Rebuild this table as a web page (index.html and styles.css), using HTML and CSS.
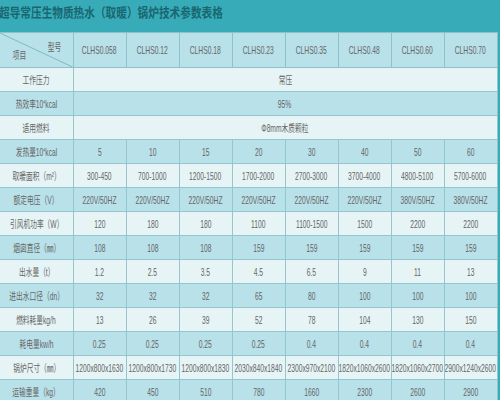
FILE: index.html
```html
<!DOCTYPE html>
<html lang="zh">
<head>
<meta charset="utf-8">
<link rel="stylesheet" href="styles.css">
</head>
<body>
<div class="page">
  <div class="titlebar"><span class="title">超导常压生物质热水（取暖）锅炉技术参数表格</span></div>
  <table class="spec">
    <colgroup>
      <col class="c-first"><col><col><col><col><col><col><col><col>
    </colgroup>
    <tr class="head">
      <th class="diag">
        <svg class="diag-line" width="73" height="35" viewBox="0 0 73 35" preserveAspectRatio="none"><line x1="0" y1="0" x2="73" y2="35" stroke="#7fb9c2" stroke-width="1"/></svg>
        <span class="t tr">型号</span>
        <span class="t bl">项目</span>
      </th>
      <th><span class="t">CLHS0.058</span></th>
      <th><span class="t">CLHS0.12</span></th>
      <th><span class="t">CLHS0.18</span></th>
      <th><span class="t">CLHS0.23</span></th>
      <th><span class="t">CLHS0.35</span></th>
      <th><span class="t">CLHS0.48</span></th>
      <th><span class="t">CLHS0.60</span></th>
      <th><span class="t">CLHS0.70</span></th>
    </tr>
    <tr class="light"><td><span class="t">工作压力</span></td><td colspan="8"><span class="t">常压</span></td></tr>
    <tr class="dark"><td><span class="t">热效率10<sup>4</sup>kcal</span></td><td colspan="8"><span class="t">95%</span></td></tr>
    <tr class="light"><td><span class="t">适用燃料</span></td><td colspan="8"><span class="t">Φ8mm木质颗粒</span></td></tr>
    <tr class="dark"><td><span class="t">发热量10<sup>4</sup>kcal</span></td><td><span class="t">5</span></td><td><span class="t">10</span></td><td><span class="t">15</span></td><td><span class="t">20</span></td><td><span class="t">30</span></td><td><span class="t">40</span></td><td><span class="t">50</span></td><td><span class="t">60</span></td></tr>
    <tr class="light"><td><span class="t">取暖面积（m²）</span></td><td><span class="t">300-450</span></td><td><span class="t">700-1000</span></td><td><span class="t">1200-1500</span></td><td><span class="t">1700-2000</span></td><td><span class="t">2700-3000</span></td><td><span class="t">3700-4000</span></td><td><span class="t">4800-5100</span></td><td><span class="t">5700-6000</span></td></tr>
    <tr class="dark"><td><span class="t">额定电压（V）</span></td><td><span class="t">220V/50HZ</span></td><td><span class="t">220V/50HZ</span></td><td><span class="t">220V/50HZ</span></td><td><span class="t">220V/50HZ</span></td><td><span class="t">220V/50HZ</span></td><td><span class="t">220V/50HZ</span></td><td><span class="t">380V/50HZ</span></td><td><span class="t">380V/50HZ</span></td></tr>
    <tr class="light"><td><span class="t">引风机功率（W）</span></td><td><span class="t">120</span></td><td><span class="t">180</span></td><td><span class="t">180</span></td><td><span class="t">1100</span></td><td><span class="t">1100-1500</span></td><td><span class="t">1500</span></td><td><span class="t">2200</span></td><td><span class="t">2200</span></td></tr>
    <tr class="dark"><td><span class="t">烟囱直径（㎜）</span></td><td><span class="t">108</span></td><td><span class="t">108</span></td><td><span class="t">108</span></td><td><span class="t">159</span></td><td><span class="t">159</span></td><td><span class="t">159</span></td><td><span class="t">159</span></td><td><span class="t">159</span></td></tr>
    <tr class="light"><td><span class="t">出水量（t）</span></td><td><span class="t">1.2</span></td><td><span class="t">2.5</span></td><td><span class="t">3.5</span></td><td><span class="t">4.5</span></td><td><span class="t">6.5</span></td><td><span class="t">9</span></td><td><span class="t">11</span></td><td><span class="t">13</span></td></tr>
    <tr class="dark"><td><span class="t">进出水口径（dn）</span></td><td><span class="t">32</span></td><td><span class="t">32</span></td><td><span class="t">32</span></td><td><span class="t">65</span></td><td><span class="t">80</span></td><td><span class="t">100</span></td><td><span class="t">100</span></td><td><span class="t">100</span></td></tr>
    <tr class="light"><td><span class="t">燃料耗量kg/h</span></td><td><span class="t">13</span></td><td><span class="t">26</span></td><td><span class="t">39</span></td><td><span class="t">52</span></td><td><span class="t">78</span></td><td><span class="t">104</span></td><td><span class="t">130</span></td><td><span class="t">150</span></td></tr>
    <tr class="dark"><td><span class="t">耗电量kw/h</span></td><td><span class="t">0.25</span></td><td><span class="t">0.25</span></td><td><span class="t">0.25</span></td><td><span class="t">0.25</span></td><td><span class="t">0.4</span></td><td><span class="t">0.4</span></td><td><span class="t">0.4</span></td><td><span class="t">0.4</span></td></tr>
    <tr class="light"><td><span class="t">锅炉尺寸（㎜）</span></td><td><span class="t">1200x800x1630</span></td><td><span class="t">1200x800x1730</span></td><td><span class="t">1200x800x1830</span></td><td><span class="t">2030x840x1840</span></td><td><span class="t">2300x970x2100</span></td><td><span class="t">1820x1060x2600</span></td><td><span class="t">1820x1060x2700</span></td><td><span class="t">2900x1240x2600</span></td></tr>
    <tr class="dark"><td><span class="t">运输重量（kg）</span></td><td><span class="t">420</span></td><td><span class="t">450</span></td><td><span class="t">510</span></td><td><span class="t">780</span></td><td><span class="t">1660</span></td><td><span class="t">2300</span></td><td><span class="t">2600</span></td><td><span class="t">2900</span></td></tr>
  </table>
</div>
</body>
</html>
```
FILE: styles.css
```css
html, body {
  margin: 0;
  padding: 0;
  background: #37acb8;
  overflow: hidden;
}
.page {
  width: 500px;
  height: 400px;
  overflow: hidden;
  background: #37acb8;
}
.titlebar {
  height: 32px;
  background: #37acb8;
  box-sizing: border-box;
  padding-top: 3px;
  white-space: nowrap;
}
.title {
  display: inline-block;
  font-family: "Noto Sans CJK SC", sans-serif;
  font-weight: bold;
  font-size: 13px;
  line-height: 16px;
  color: #1a6670;
  transform: scaleX(0.82);
  transform-origin: left center;
  margin-left: -1px;
}
.spec {
  border-collapse: collapse;
  table-layout: fixed;
  width: 497px;
  font-family: "Liberation Sans", "Noto Sans CJK SC", sans-serif;
  font-size: 10.5px;
  color: #656565;
}
.spec col { width: 53px; }
.spec col.c-first { width: 73px; }
.spec th, .spec td {
  border: 1px solid #93c6cd;
  padding: 0;
  text-align: center;
  vertical-align: middle;
  white-space: nowrap;
  overflow: hidden;
  font-weight: normal;
}
.spec tr { height: 24px; }
.spec tr.head { height: 35px; }
.head th { background: #b9e1ea; border-color: #8fc1c9; }
.dark td { background: #b9e1ea; }
.light td { background: #e6f4f6; }
.spec tr > :first-child { border-left: none; }
.t {
  display: inline-block;
  transform: scaleX(0.64);
  transform-origin: center center;
  margin: 0 -24px;
}
.t sup {
  font-size: 5.5px;
  vertical-align: 4px;
  line-height: 0;
}
.diag {
  position: relative;
}
.diag-line {
  position: absolute;
  left: 0;
  top: 0;
  width: 100%;
  height: 100%;
  display: block;
}
.diag .t {
  position: absolute;
  margin: 0;
  line-height: 10px;
}
.diag .tr { right: 8px; top: 9px; }
.diag .bl { left: 9px; bottom: 7px; }
```
